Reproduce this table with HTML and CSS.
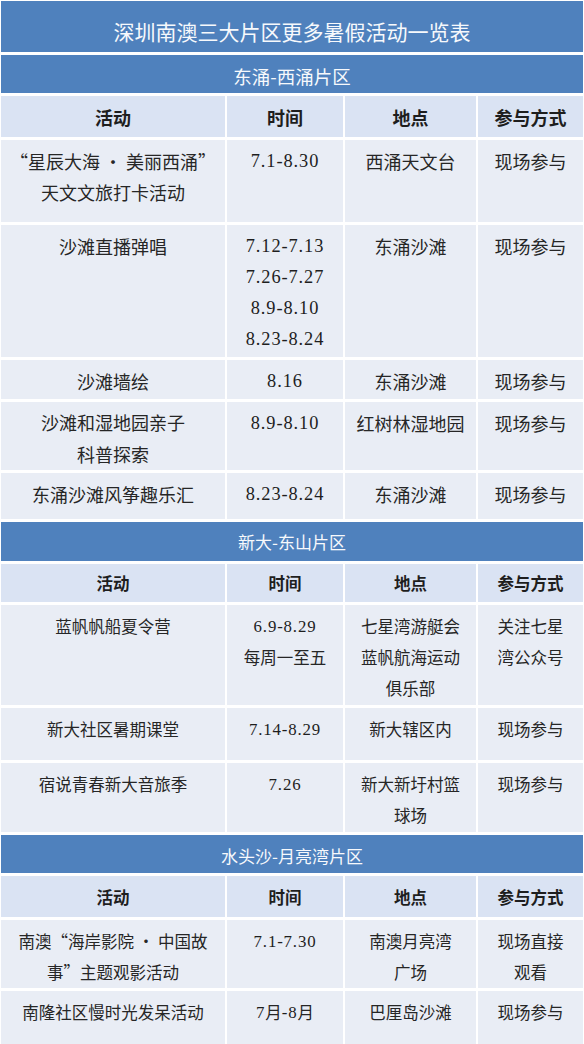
FILE: index.html
```html
<!DOCTYPE html>
<html lang="zh-CN">
<head>
<meta charset="utf-8">
<title>深圳南澳三大片区更多暑假活动一览表</title>
<link rel="stylesheet" href="styles.css">
</head>
<body>
<table class="sched">
  <colgroup>
    <col class="c-act">
    <col class="c-time">
    <col class="c-place">
    <col class="c-way">
  </colgroup>
  <thead>
    <tr class="h-title"><th colspan="4" class="title">深圳南澳三大片区更多暑假活动一览表</th></tr>
  </thead>
  <tbody class="s1">
    <tr class="h-sec1"><th colspan="4" class="sec">东涌-西涌片区</th></tr>
    <tr class="h-colh1"><th class="colh">活动</th><th class="colh">时间</th><th class="colh">地点</th><th class="colh">参与方式</th></tr>
    <tr class="h82"><td>“星辰大海 · 美丽西涌”<br>天文文旅打卡活动</td><td><span class="num">7.1-8.30</span></td><td>西涌天文台</td><td>现场参与</td></tr>
    <tr class="h132"><td>沙滩直播弹唱</td><td><span class="num">7.12-7.13</span><br><span class="num">7.26-7.27</span><br><span class="num">8.9-8.10</span><br><span class="num">8.23-8.24</span></td><td>东涌沙滩</td><td>现场参与</td></tr>
    <tr class="h39"><td>沙滩墙绘</td><td><span class="num">8.16</span></td><td>东涌沙滩</td><td>现场参与</td></tr>
    <tr class="h68"><td class="loose">沙滩和湿地园亲子<br>科普探索</td><td><span class="num">8.9-8.10</span></td><td>红树林湿地园</td><td>现场参与</td></tr>
    <tr class="h46"><td>东涌沙滩风筝趣乐汇</td><td><span class="num">8.23-8.24</span></td><td>东涌沙滩</td><td>现场参与</td></tr>
  </tbody>
  <tbody class="s2">
    <tr class="h-sec2"><th colspan="4" class="sec">新大-东山片区</th></tr>
    <tr class="h-colh2"><th class="colh">活动</th><th class="colh">时间</th><th class="colh">地点</th><th class="colh">参与方式</th></tr>
    <tr class="h100"><td>蓝帆帆船夏令营</td><td><span class="num">6.9-8.29</span><br>每周一至五</td><td>七星湾游艇会<br>蓝帆航海运动<br>俱乐部</td><td>关注七星<br>湾公众号</td></tr>
    <tr class="h52"><td>新大社区暑期课堂</td><td><span class="num">7.14-8.29</span></td><td>新大辖区内</td><td>现场参与</td></tr>
    <tr class="h69"><td>宿说青春新大音旅季</td><td><span class="num">7.26</span></td><td>新大新圩村篮<br>球场</td><td>现场参与</td></tr>
  </tbody>
  <tbody class="s3">
    <tr class="h-sec3"><th colspan="4" class="sec">水头沙-月亮湾片区</th></tr>
    <tr class="h-colh3"><th class="colh">活动</th><th class="colh">时间</th><th class="colh">地点</th><th class="colh">参与方式</th></tr>
    <tr class="h68"><td>南澳“海岸影院 · 中国故<br>事”主题观影活动</td><td><span class="num">7.1-7.30</span></td><td>南澳月亮湾<br>广场</td><td>现场直接<br>观看</td></tr>
    <tr class="h56"><td>南隆社区慢时光发呆活动</td><td><span class="num">7</span>月<span class="num">-8</span>月</td><td>巴厘岛沙滩</td><td>现场参与</td></tr>
  </tbody>
</table>
</body>
</html>
```
FILE: styles.css
```css
html, body {
  margin: 0;
  padding: 0;
  background: #ffffff;
  overflow: hidden;
}

body {
  font-family: "Noto Sans CJK SC", sans-serif;
  color: #262626;
}

.sched {
  border-collapse: separate;
  border-spacing: 2px 3px;
  table-layout: fixed;
  width: 586px;
  margin: -2px 0 0 -1px;
}

.c-act { width: 224px; }
.c-time { width: 116px; }
.c-place { width: 131px; }
.c-way { width: 105px; }

.sched th,
.sched td {
  padding: 0;
  text-align: center;
  white-space: nowrap;
  overflow: hidden;
}

.title {
  background: #4f81bd;
  color: #f7f9fc;
  font-weight: 400;
  font-size: 21px;
  line-height: 32px;
  vertical-align: top;
  padding-top: 14px !important;
}

.sec {
  background: #4f81bd;
  color: #f7f9fc;
  font-weight: 400;
  line-height: 30px;
  vertical-align: middle;
}

.s1 .sec { font-size: 18.5px; padding-top: 4px !important; }
.s2 .sec { font-size: 17px; }
.s3 .sec { font-size: 17px; padding-top: 3px !important; }

.colh {
  background: #dae3f3;
  color: #1e1e1e;
  font-weight: 700;
  line-height: 30px;
  vertical-align: middle;
}

.sched td {
  background: #e9edf5;
  vertical-align: top;
  line-height: 31px;
  padding-top: 6px;
}

.s1 td, .s1 .colh { font-size: 18px; }
.s2 td, .s2 .colh,
.s3 td, .s3 .colh { font-size: 16.5px; }

.sched td.loose { line-height: 32px; padding-top: 4px; }

.num {
  font-family: "Liberation Serif", serif;
  font-size: 1.02em;
  letter-spacing: 0.05em;
  vertical-align: top;
  color: #1e1e1e;
}

.h-title { height: 51px; }
.h-sec1 { height: 38px; }
.h-colh1 { height: 41px; }
.h-sec2 { height: 39px; }
.h-colh2 { height: 38px; }
.h-sec3 { height: 38px; }
.h-colh3 { height: 41px; }
.h82 { height: 82px; }
.h132 { height: 132px; }
.h39 { height: 39px; }
.h68 { height: 68px; }
.h46 { height: 46px; }
.h100 { height: 100px; }
.h52 { height: 52px; }
.h69 { height: 69px; }
.h56 { height: 56px; }
```
